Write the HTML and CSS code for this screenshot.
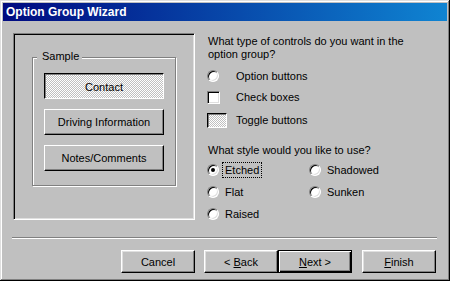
FILE: index.html
```html
<!DOCTYPE html>
<html>
<head>
<meta charset="utf-8">
<title>Option Group Wizard</title>
<link rel="stylesheet" href="styles.css">
</head>
<body>
<div class="window">
  <div class="titlebar">Option Group Wizard</div>
  <div class="main">
    <div class="preview">
      <div class="group">
        <span class="group-label">Sample</span>
        <div class="sample-btn pressed">Contact</div>
        <div class="sample-btn">Driving Information</div>
        <div class="sample-btn">Notes/Comments</div>
      </div>
    </div>
    <div class="options">
      <p class="question">What type of controls do you want in the<br>option group?</p>
      <div class="type-list">
        <div class="type-row"><span class="cell"><span class="radio"></span></span><span>Option buttons</span></div>
        <div class="type-row"><span class="cell"><span class="checkbox"></span></span><span>Check boxes</span></div>
        <div class="type-row toggle-row"><span class="cell"><span class="toggle"></span></span><span>Toggle buttons</span></div>
      </div>
      <p class="question q2">What style would you like to use?</p>
      <div class="style-grid">
        <div class="style-opt"><span class="radio checked"></span><span class="style-label focus">Etched</span></div>
        <div class="style-opt"><span class="radio"></span><span class="style-label">Shadowed</span></div>
        <div class="style-opt"><span class="radio"></span><span class="style-label">Flat</span></div>
        <div class="style-opt"><span class="radio"></span><span class="style-label">Sunken</span></div>
        <div class="style-opt"><span class="radio"></span><span class="style-label">Raised</span></div>
      </div>
    </div>
  </div>
  <div class="separator"></div>
  <div class="buttons">
    <div class="btn"><span>Cancel</span></div>
    <div class="btn btn-back"><span>&lt; <u>B</u>ack</span></div>
    <div class="btn btn-default"><span><u>N</u>ext &gt;</span></div>
    <div class="btn btn-finish"><span><u>F</u>inish</span></div>
  </div>
</div>
</body>
</html>
```
FILE: styles.css
```css
html, body {
  margin: 0;
  padding: 0;
  background: #c0c0c0;
}
body {
  font-family: "Liberation Sans", Arial, sans-serif;
  font-size: 11px;
  color: #000;
}
.window {
  width: 450px;
  height: 281px;
  box-sizing: border-box;
  padding: 3px;
  background: #c0c0c0;
  box-shadow: inset -1px -1px 0 #000, inset 1px 1px 0 #dfdfdf, inset -2px -2px 0 #808080, inset 2px 2px 0 #fff;
}
.titlebar {
  height: 18px;
  line-height: 18px;
  padding-left: 3px;
  color: #fff;
  font-weight: bold;
  font-size: 12px;
  background: linear-gradient(90deg, #000a80 0%, #0f84d2 100%);
}
.main {
  display: flex;
  margin-top: 12px;
  padding-left: 10px;
}
.preview {
  width: 182px;
  height: 187px;
  box-sizing: border-box;
  border: 1px solid;
  border-color: #808080 #fff #fff #808080;
  box-shadow: inset 1px 1px 0 #000, inset -1px -1px 0 #dfdfdf;
  padding: 23px 0 0 18px;
  flex-shrink: 0;
}
.group {
  position: relative;
  width: 144px;
  height: 129px;
  box-sizing: border-box;
  border: 1px solid #808080;
  box-shadow: 1px 1px 0 #fff, inset 1px 1px 0 #fff;
  padding: 15px 0 0 11px;
  display: flex;
  flex-direction: column;
  gap: 10px;
}
.group-label {
  position: absolute;
  top: -8px;
  left: 4px;
  line-height: 13px;
  padding: 0 3px 0 5px;
  background: #c0c0c0;
}
.sample-btn {
  width: 120px;
  height: 26px;
  box-sizing: border-box;
  border: 1px solid;
  border-color: #fff #000 #000 #fff;
  box-shadow: inset -1px -1px 0 #808080;
  display: flex;
  align-items: center;
  justify-content: center;
}
.sample-btn.pressed {
  border-color: #000 #fff #fff #000;
  box-shadow: inset 1px 1px 0 #808080;
  background-color: #c0c0c0;
  background-image: conic-gradient(#fff 25%, #c0c0c0 0 50%, #fff 0 75%, #c0c0c0 0);
  background-size: 2px 2px;
  padding-top: 1px;
}
.options {
  margin-left: 12px;
  padding-top: 2px;
}
.question {
  margin: 0;
  line-height: 13px;
  padding-left: 1px;
}
.type-list {
  display: flex;
  flex-direction: column;
  gap: 5px;
  margin-top: 7px;
}
.type-row {
  display: flex;
  align-items: center;
  height: 16px;
}
.toggle-row {
  margin-top: 2px;
}
.cell {
  width: 29px;
  flex-shrink: 0;
  display: flex;
  align-items: center;
}
.radio {
  width: 12px;
  height: 12px;
  box-sizing: border-box;
  border-radius: 50%;
  border: 1px solid;
  border-color: #808080 #fff #fff #808080;
  background: #fff;
  box-shadow: inset 1px 1px 0 #000, inset -1px -1px 0 #dfdfdf;
  flex-shrink: 0;
}
.radio.checked::after {
  content: "";
  display: block;
  width: 4px;
  height: 4px;
  border-radius: 50%;
  background: #000;
  margin: 3px auto 0;
}
.checkbox {
  width: 13px;
  height: 13px;
  box-sizing: border-box;
  border: 1px solid;
  border-color: #808080 #fff #fff #808080;
  background: #fff;
  box-shadow: inset 1px 1px 0 #000, inset -1px -1px 0 #dfdfdf;
}
.toggle {
  width: 20px;
  height: 15px;
  box-sizing: border-box;
  border: 1px solid;
  border-color: #000 #fff #fff #000;
  box-shadow: inset 1px 1px 0 #808080;
  background-color: #c0c0c0;
  background-image: conic-gradient(#fff 25%, #c0c0c0 0 50%, #fff 0 75%, #c0c0c0 0);
  background-size: 2px 2px;
}
.q2 {
  margin-top: 16px;
}
.style-grid {
  display: grid;
  grid-template-columns: 102px auto;
  grid-auto-rows: 22px;
  margin-top: 2px;
}
.style-opt {
  display: flex;
  align-items: center;
}
.style-label {
  margin-left: 3px;
  padding: 1px 2px;
  line-height: 12px;
  border: 1px dotted transparent;
}
.style-label.focus {
  border-color: #000;
}
.separator {
  margin: 12px 0 0 9px;
  width: 425px;
  height: 0;
  border-top: 1px solid #808080;
  border-bottom: 1px solid #fff;
}
.buttons {
  display: flex;
  justify-content: flex-end;
  margin-top: 11px;
  padding-right: 11px;
}
.btn {
  width: 74px;
  height: 23px;
  box-sizing: border-box;
  border: 1px solid;
  border-color: #fff #000 #000 #fff;
  box-shadow: inset -1px -1px 0 #808080, inset 1px 1px 0 #dfdfdf;
  display: flex;
  align-items: center;
  justify-content: center;
}
.btn u {
  text-decoration-thickness: 1px;
}
.btn-back {
  margin-left: 9px;
}
.btn-default {
  border-color: #000;
  box-shadow: inset 1px 1px 0 #fff, inset -1px -1px 0 #000, inset -2px -2px 0 #808080;
}
.btn-finish {
  margin-left: 10px;
}
```
